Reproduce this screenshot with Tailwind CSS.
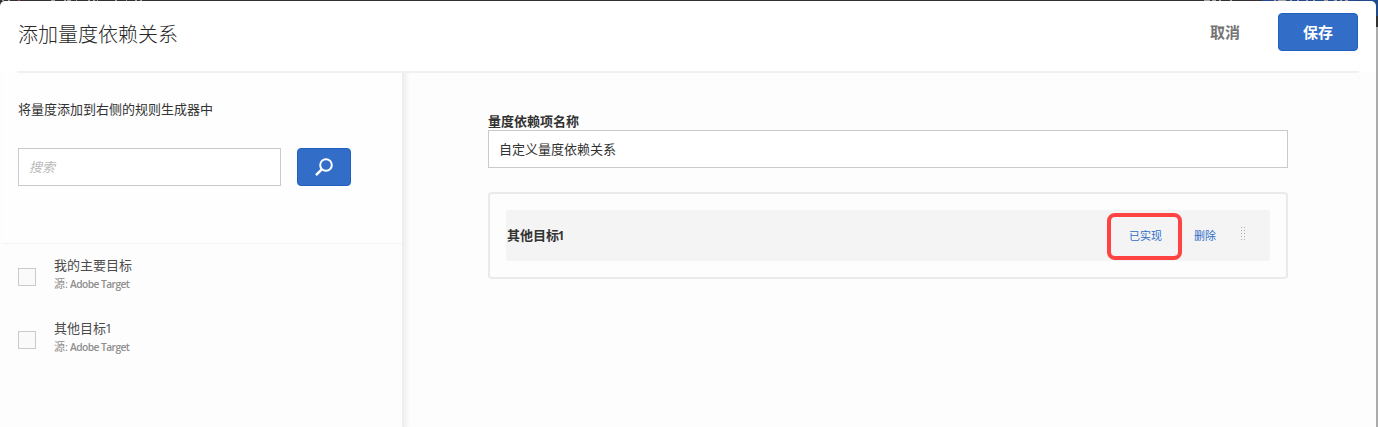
<!DOCTYPE html>
<html lang="zh-CN">
<head>
<meta charset="utf-8">
<title>添加量度依赖关系</title>
<script src="https://cdn.jsdelivr.net/npm/@tailwindcss/browser@4"></script>
</head>
<body class="h-[427px] w-[1378px] overflow-hidden bg-[linear-gradient(to_right,#323032_0,#323032_1262px,#1f4a8c_1262px,#1f4a8c_1358px,#323032_1358px,#323032_1359px,#1f4a8c_1359px)] font-['Open_Sans','Noto_Sans_CJK_SC',sans-serif] text-[13px] text-[#323232]">
<svg class="absolute top-0 left-0 h-px w-[1378px]" viewBox="0 0 1378 1" shape-rendering="crispEdges" aria-hidden="true">
  <path fill="#a8a3a0" d="M2 0h2v1H2zM8 0h2v1H8zM51 0h4v1H51zM64 0h2v1H64zM67 0h4v1H67zM76 0h1v1H76zM88 0h2v1H88zM93 0h2v1H93zM97 0h1v1H97zM115 0h2v1H115zM126 0h1v1H126zM135 0h2v1H135zM140 0h2v1H140zM1204 0h6v1H1204zM1212 0h4v1H1212zM1219 0h2v1H1219zM1230 0h2v1H1230zM1274 0h2v1H1274zM1278 0h8v1H1278zM1290 0h2v1H1290zM1297 0h2v1H1297zM1306 0h2v1H1306zM1313 0h2v1H1313zM1324 0h4v1H1324zM1334 0h3v1H1334zM1340 0h2v1H1340zM1345 0h3v1H1345z"/>
  <path fill="#b03a80" d="M18 0h2v1H18z"/>
</svg>
<div class="h-full bg-[linear-gradient(#1f4a8c_0,#1f4a8c_16px,#323232_16px,#323232_27px,#ababab_27px)] bg-[length:4px_100%] bg-right bg-no-repeat pt-px pr-[2px]">
  <main class="flex h-[426px] flex-col rounded-t-[5px] bg-white">
    <header class="mr-[17px] ml-[17px] flex h-[72px] shrink-0 items-start border-b-2 border-[#f1f1f1] pl-px">
      <h1 class="mt-[19px] text-[20px] leading-[30px] font-light text-[#282828]">添加量度依赖关系</h1>
      <button class="mt-3 ml-auto h-[38px] w-[68px] text-[15px] font-bold text-[#747474]">取消</button>
      <button class="mt-3 mr-px ml-[19px] h-[38px] w-20 rounded-[4px] border border-[#1f5fbf] bg-[#326ec8] text-[15px] font-bold text-white">保存</button>
    </header>
    <div class="flex flex-1 bg-[#fdfdfd] pl-[3px]">
      <aside class="relative z-10 w-[399px] shrink-0 after:absolute after:inset-y-0 after:left-full after:w-2 after:bg-linear-to-r after:from-[#ececec] after:to-[#fdfdfd]">
        <div class="h-[171px] border-b border-[#f3f3f3] bg-[#fefefe] pt-[26px] pl-[15px]">
          <p class="leading-5">将量度添加到右侧的规则生成器中</p>
          <div class="mt-[29px] flex gap-4">
            <div class="flex h-[38px] w-[263px] items-center border border-[#cacaca] bg-white pt-px pl-[10px] text-[#b8b8b8] italic">搜索</div>
            <button class="flex h-[38px] w-[54px] items-center justify-center rounded-[4px] border border-[#1f5fbf] bg-[#326ec8]" aria-label="搜索">
              <svg class="-ml-px h-[18px] w-[18px]" viewBox="0 0 18 18" fill="none" stroke="#fff" stroke-width="2"><circle cx="11" cy="7" r="5.8"/><path d="M7 11.2 1 17.2" stroke-width="2.4"/></svg>
            </button>
          </div>
        </div>
        <ul class="pt-3 pl-[15px]">
          <li class="flex h-[63px] gap-[18px]">
            <span class="mt-3 h-[18px] w-[18px] border border-[#cacaca] bg-[#fafafa]"></span>
            <div class="-mt-px"><div class="leading-5 text-[#4b4b4b]">我的主要目标</div><div class="mt-px text-[11px] leading-4 text-[#8e8e8e]">源: <span class="-ml-px inline-block origin-left scale-x-[.93] font-semibold whitespace-nowrap tracking-[-0.6px]">Adobe Target</span></div></div>
          </li>
          <li class="flex h-[63px] gap-[18px]">
            <span class="mt-3 h-[18px] w-[18px] border border-[#cacaca] bg-[#fafafa]"></span>
            <div class="-mt-px"><div class="leading-5 text-[#4b4b4b]">其他目标<span class="-ml-px">1</span></div><div class="mt-px text-[11px] leading-4 text-[#8e8e8e]">源: <span class="-ml-px inline-block origin-left scale-x-[.93] font-semibold whitespace-nowrap tracking-[-0.6px]">Adobe Target</span></div></div>
          </li>
        </ul>
      </aside>
      <section class="w-[886px] pt-[39px] pl-[86px]">
        <label class="block h-[18px] leading-[19px] font-bold">量度依赖项名称</label>
        <div class="flex h-[38px] items-center border border-[#cacaca] bg-white pt-px pl-[10px]">自定义量度依赖关系</div>
        <div class="mt-6 h-[87px] rounded-[4px] border-2 border-[#eaeaea] px-4 pt-4">
          <div class="flex h-[51px] items-center rounded-[3px] bg-[#f4f4f4] pl-px">
            <strong class="pb-0.5 leading-5 font-bold">其他目标<span class="-ml-px inline-block origin-left scale-x-[.85]">1</span></strong>
            <div class="ml-auto flex h-[47px] w-[75px] translate-y-[1px] items-center justify-center rounded-[8px] border-4 border-[#ff4343] pl-[2px] text-[11px] text-[#326ec8]">已实现</div>
            <span class="ml-[12px] w-[22px] pt-0.5 text-[11px] whitespace-nowrap text-[#326ec8]">删除</span>
            <svg class="mr-[25px] ml-[25px] h-[13px] w-1 -translate-y-[2px]" viewBox="0 0 4 13" fill="#b5a3c0" shape-rendering="crispEdges"><path d="M0 0h1v1H0zM3 0h1v1H3zM0 3h1v1H0zM3 3h1v1H3zM0 6h1v1H0zM3 6h1v1H3zM0 9h1v1H0zM3 9h1v1H3zM0 12h1v1H0zM3 12h1v1H3z"/></svg>
          </div>
        </div>
      </section>
    </div>
  </main>
</div>
</body>
</html>
